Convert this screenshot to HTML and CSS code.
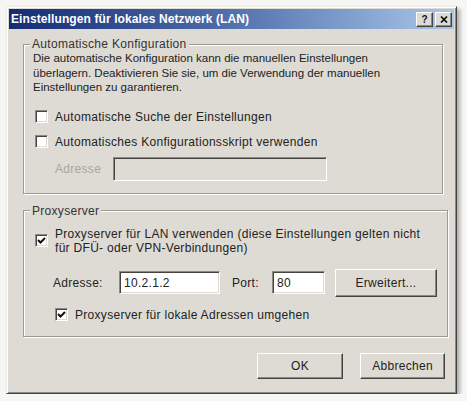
FILE: index.html
```html
<!DOCTYPE html>
<html lang="de">

<head>
    <meta charset="UTF-8">
    <title>Einstellungen für lokales Netzwerk (LAN)</title>
    <link rel="stylesheet" href="styles.css">
</head>

<body>
    <div class="window">
        <div class="titlebar">
            <span class="title">Einstellungen für lokales Netzwerk (LAN)</span>
            <div class="title-buttons">
                <span class="tbtn help">?</span>
                <span class="tbtn">
                    <svg width="8" height="7" viewBox="0 0 8 7">
                        <path d="M1 0.5 L7 6.5 M7 0.5 L1 6.5" stroke="#111" stroke-width="1.7" fill="none" />
                    </svg>
                </span>
            </div>
        </div>

        <div class="content">
            <!-- Automatische Konfiguration -->
            <fieldset class="group group-auto">
                <legend>Automatische Konfiguration</legend>
                <p class="desc">
                    Die automatische Konfiguration kann die manuellen Einstellungen<br>
                    überlagern. Deaktivieren Sie sie, um die Verwendung der manuellen<br>
                    Einstellungen zu garantieren.
                </p>
                <label class="check first">
                    <span class="box"></span>
                    <span>Automatische Suche der Einstellungen</span>
                </label>
                <label class="check second">
                    <span class="box"></span>
                    <span>Automatisches Konfigurationsskript verwenden</span>
                </label>
                <div class="script-row">
                    <span class="disabled-label">Adresse</span>
                    <span class="field disabled"></span>
                </div>
            </fieldset>

            <!-- Proxyserver -->
            <fieldset class="group group-proxy">
                <legend>Proxyserver</legend>
                <label class="check multi">
                    <span class="box">
                        <svg width="9" height="9" viewBox="0 0 9 9">
                            <path d="M1 4 L3.5 6.5 L8 2" stroke="#111" stroke-width="2" fill="none" />
                        </svg>
                    </span>
                    <span>Proxyserver für LAN verwenden (diese Einstellungen gelten nicht<br>für DFÜ- oder VPN-Verbindungen)</span>
                </label>
                <div class="proxy-row">
                    <span class="row-label addr-label">Adresse:</span>
                    <span class="field addr">10.2.1.2</span>
                    <span class="row-label port-label">Port:</span>
                    <span class="field port">80</span>
                    <button class="btn advanced">Erweitert...</button>
                </div>
                <label class="check bypass">
                    <span class="box">
                        <svg width="9" height="9" viewBox="0 0 9 9">
                            <path d="M1 4 L3.5 6.5 L8 2" stroke="#111" stroke-width="2" fill="none" />
                        </svg>
                    </span>
                    <span>Proxyserver für lokale Adressen umgehen</span>
                </label>
            </fieldset>

            <div class="actions">
                <button class="btn ok">OK</button>
                <button class="btn cancel">Abbrechen</button>
            </div>
        </div>
    </div>
</body>

</html>
```

FILE: styles.css
```css
body {
    margin: 0;
    background-color: #f6f6f5;
    font-family: "Liberation Sans", Arial, sans-serif;
    font-size: 12px;
    letter-spacing: 0.3px;
    color: #222;
}

.window {
    box-sizing: border-box;
    width: 451px;
    height: 388px;
    margin: 6px 0 0 6px;
    padding: 2px;
    background-color: #dedbd4;
    border: 1px solid;
    border-color: #ecebe6 #45433f #45433f #ecebe6;
    box-shadow: inset 1px 1px 0 #fff, inset -1px -1px 0 #8d8a84, 3px 3px 4px rgba(0, 0, 0, 0.3);
}

.titlebar {
    display: flex;
    align-items: center;
    justify-content: space-between;
    height: 20px;
    padding: 0 2px 0 2px;
    background: linear-gradient(to right, #142c74, #4a68a6 45%, #a9c7ea);
}

.title {
    color: #fff;
    font-weight: bold;
    font-size: 12px;
    letter-spacing: 0.1px;
}

.title-buttons {
    display: flex;
    gap: 2px;
}

.tbtn {
    box-sizing: border-box;
    display: flex;
    align-items: center;
    justify-content: center;
    width: 17px;
    height: 15px;
    background-color: #dedbd4;
    border: 1px solid;
    border-color: #fff #45433f #45433f #fff;
    box-shadow: inset -1px -1px 0 #8d8a84;
    font-weight: bold;
    font-size: 10px;
    letter-spacing: 0;
    color: #111;
}

.content {
    padding: 8px 11px 0 14px;
}

.group {
    margin: 0;
    padding: 0 10px 12px 9px;
    border: 1px solid #9d9a93;
    box-shadow: inset 1px 1px 0 #fff, 1px 1px 0 #fff;
}

.group legend {
    margin-left: -3px;
    padding: 0 2px;
    line-height: 14px;
    background-color: #dedbd4;
    color: #333;
}

.desc {
    margin: 0;
    font-size: 11.5px;
    letter-spacing: 0;
    line-height: 14.5px;
}

.check {
    display: flex;
    align-items: center;
    gap: 7px;
    margin-left: 2px;
    line-height: 14px;
}

.check.first {
    margin-top: 15px;
}

.check.second {
    margin-top: 11px;
}

.box {
    box-sizing: border-box;
    display: flex;
    align-items: center;
    justify-content: center;
    flex: none;
    width: 13px;
    height: 13px;
    background-color: #fff;
    border: 1px solid;
    border-color: #8d8a84 #fff #fff #8d8a84;
    box-shadow: inset 1px 1px 0 #45433f, inset -1px -1px 0 #dedbd4;
}

.script-row {
    display: flex;
    align-items: center;
    margin-top: 8px;
    padding-left: 22px;
}

.disabled-label {
    width: 58px;
    color: #a9a69f;
}

.field {
    box-sizing: border-box;
    display: flex;
    align-items: center;
    height: 23px;
    padding-left: 4px;
    background-color: #fff;
    border: 1px solid;
    border-color: #8d8a84 #fff #fff #8d8a84;
    box-shadow: inset 1px 1px 0 #45433f, inset -1px -1px 0 #dedbd4;
}

.field.disabled {
    width: 214px;
    height: 24px;
    background-color: #dedbd4;
}

.group-proxy {
    margin-top: 10px;
    padding-bottom: 14px;
}

.check.multi {
    margin-top: 9px;
}

.proxy-row {
    display: flex;
    align-items: center;
    margin-top: 14px;
    padding-left: 20px;
}

.addr-label {
    width: 66px;
}

.field.addr {
    width: 101px;
}

.port-label {
    width: 40px;
    margin-left: 12px;
}

.field.port {
    width: 53px;
}

.btn {
    box-sizing: border-box;
    height: 26px;
    background-color: #dedbd4;
    border: 1px solid;
    border-color: #fff #45433f #45433f #fff;
    box-shadow: inset -1px -1px 0 #8d8a84;
    font-family: "Liberation Sans", Arial, sans-serif;
    font-size: 12px;
    letter-spacing: 0.3px;
    color: #222;
    padding: 0;
}

.btn.advanced {
    width: 102px;
    height: 28px;
    margin-left: 10px;
}

.check.bypass {
    margin-top: 11px;
    margin-left: 22px;
}

.actions {
    display: flex;
    justify-content: flex-end;
    gap: 17px;
    margin-top: 16px;
    margin-right: -2px;
}

.btn.ok {
    width: 86px;
}

.btn.cancel {
    width: 85px;
}
```
